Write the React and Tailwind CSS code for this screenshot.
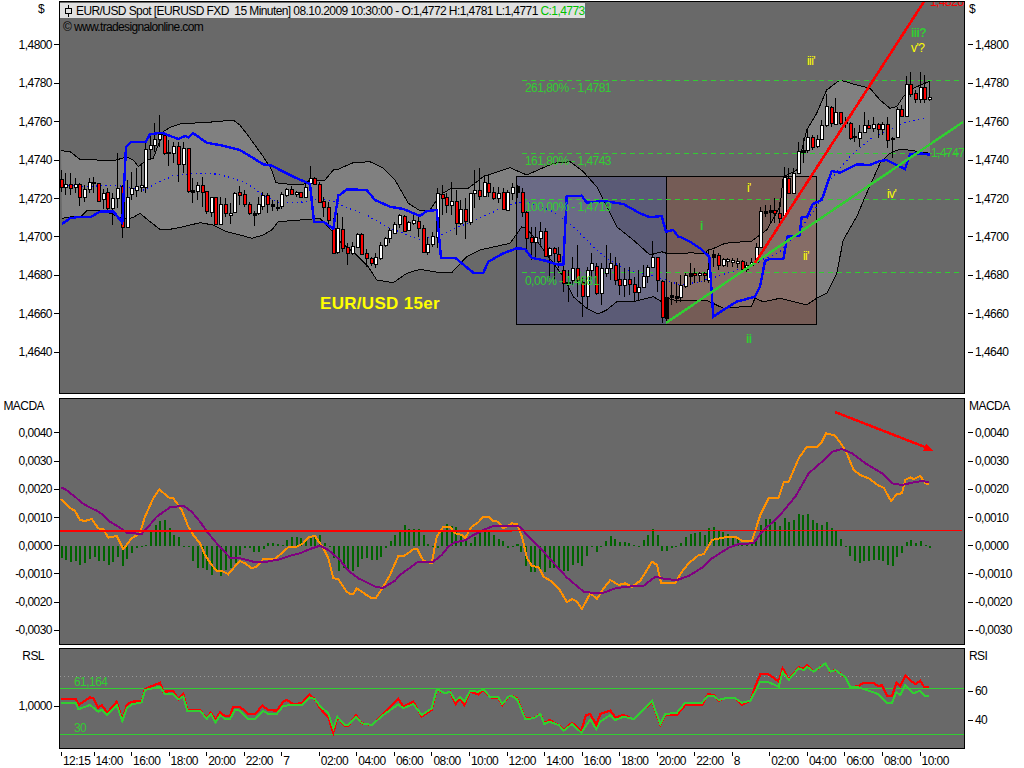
import React from "react";

const P = (o, list) => list.map(([x, y]) => [o[0] + x / 3, o[1] + y / 3]);
const S = (...lists) => lists.flat().map(([x, y]) => `${x.toFixed(1)},${y.toFixed(1)}`).join(" ");

const Z1 = [0, 0], Z2 = [340, 100], Z3 = [680, 0], Z9 = [640, 230];
const M6 = [0, 395], M7 = [512, 395], R4 = [0, 640], R5 = [512, 640];

const upper = [
  ...P(Z1, [[183,452],[210,455],[240,478],[290,480],[340,483],[380,470],[400,480],[415,500],[440,480],[460,475],[490,395],[510,382],[540,372],[600,368],[650,365],[700,360],[720,375],[750,415],[790,470],[815,510],[828,548],[860,552],[910,553],[930,540],[975,540],[1000,510],[1017,508]]),
  ...P(Z2, [[0,205],[40,188],[90,185],[130,205],[165,240],[205,310],[240,332],[270,330],[300,285],[330,267],[385,265],[430,230],[510,203],[560,225],[640,190],[690,185],[730,215],[770,260],[810,340],[830,380],[880,420],[930,465],[965,455]]),
  ...P(Z9, [[79,70],[120,72],[150,68],[195,72],[205,58]]),
  ...P(Z3, [[90,750],[135,730],[215,723],[260,690],[300,620],[310,530],[350,510],[380,390],[410,340],[440,270],[480,240],[530,255],[570,265],[600,300],[630,325],[650,320],[670,290],[700,265],[750,243]]),
];
const lower = [
  ...P(Z1, [[186,655],[215,650],[245,648],[262,630],[300,630],[330,640],[355,650],[380,658],[400,652],[420,640],[450,665],[480,688],[510,688],[550,680],[600,668],[640,675],[680,695],[720,705],[755,715],[790,705],[815,690],[835,665],[900,660],[960,655],[1017,715]]),
  ...P(Z2, [[0,425],[50,465],[85,500],[110,540],[160,548],[200,520],[240,508],[300,518],[335,518],[380,470],[420,450],[510,430],[545,381],[560,385],[600,435],[640,490],[670,530],[700,590],[740,625],[775,642],[800,630],[830,605],[880,605],[940,590],[965,605]]),
  ...P(Z9, [[80,205],[110,212],[150,210],[205,213]]),
  ...P(Z3, [[130,925],[215,918],[225,895],[250,905],[300,895],[340,905],[380,915],[410,895],[440,880],[470,820],[490,720],[530,650],[560,580],[600,490],[630,460],[660,447],[700,452],[750,460]]),
];
const dotted = S(
  P(Z1, [[190,555],[250,560],[340,555],[380,560],[430,570],[470,550],[520,527],[590,520],[650,522],[700,535],[740,550],[780,580],[840,610],[920,605],[960,595],[1017,610]]),
  P(Z2, [[0,315],[80,345],[140,380],[240,420],[300,405],[370,375],[520,310],[560,305],[640,335],[700,380],[760,440],[800,475],[860,510],[950,530]]),
  P(Z3, [[0,855],[60,845],[110,830],[200,800],[300,755],[350,700],[410,620],[450,540],[510,470],[580,410],[630,390],[680,365],[740,355]])
);
const blue = S(
  P(Z1, [[186,672],[210,655],[240,650],[270,652],[300,635],[340,634],[367,668],[378,440],[395,425],[437,425],[450,403],[485,398],[535,417],[555,408],[565,412],[580,400],[620,428],[670,437],[720,450],[790,493],[815,497],[880,530],[930,552],[942,665],[970,665],[1000,686],[1015,585],[1020,585]]),
  P(Z2, [[20,268],[80,270],[105,300],[150,320],[190,327],[240,348],[260,333],[290,330],[303,473],[345,473],[400,518],[430,518],[445,485],[490,460],[530,445],[555,447],[575,473],[620,483],[650,493],[670,494],[680,288],[725,287],[740,308],[790,303],[850,312],[900,340],[930,352],[965,348],[978,395],[1000,390],[1015,410]]),
  P(Z3, [[0,710],[30,725],[60,745],[88,770],[95,880],[100,950],[130,930],[170,905],[225,890],[240,860],[255,783],[270,777],[310,778],[322,710],[358,708],[365,652],[382,650],[398,612],[425,600],[455,513],[480,518],[530,493],[570,495],[600,483],[620,480],[650,495],[675,507],[690,462],[720,460],[750,464]])
);

const W = "#ffffff", R = "#ff0000", K = "#000000";
const C1 = [[183,R,510,538,560,575],[196,W,520,553,560,585],[210,R,518,553,563,585],[226,W,535,553,562,580],[238,R,550,553,592,617],[253,W,555,568,592,605],[268,W,535,547,568,580],[280,K,530,545,550,580],[295,R,550,550,602,603],[310,W,567,580,598,627],[322,R,565,577,625,630],[337,W,580,595,625,675],[352,W,460,565,595,625],[367,R,555,558,680,713],[380,W,540,590,680,685],[394,W,515,565,583,600],[408,W,505,558,570,590],[422,W,490,555,560,575],[436,W,422,448,562,580],[450,W,405,436,448,480],[463,W,370,418,436,455],[478,W,345,403,418,440],[492,R,405,405,458,465],[505,K,420,456,460,498],[520,W,425,438,460,490],[535,R,425,438,493,545],[549,W,425,443,493,520],[563,R,443,445,572,578],[577,K,535,570,575,608],[591,W,545,555,572,600],[605,R,530,556,575,620],[619,R,573,574,632,642],[634,W,590,592,635,650],[646,R,590,592,672,675],[661,W,590,612,672,675],[675,R,595,612,640,650],[689,W,610,638,645,672],[703,W,575,580,637,640],[718,R,558,576,584,615],[733,R,570,582,613,620],[746,R,605,613,640,645],[761,K,632,640,645,678],[775,W,590,612,640,645],[787,W,575,585,617,630],[802,R,580,586,612,640],[817,K,600,612,618,632],[830,K,600,620,624,632],[844,W,575,583,617,628],[859,W,563,568,585,590],[873,R,558,568,583,585],[887,W,572,577,583,590],[901,R,575,577,590,590],[916,W,545,562,590,595],[929,W,498,535,550,552],[943,R,530,535,553,555],[958,R,545,553,605,608],[970,R,590,604,622,650],[985,R,605,622,660,680],[999,R,655,685,760,762],[1012,W,640,685,757,762]];
const C2 = [[7,R,350,388,443,455],[22,R,430,440,458,495],[37,W,425,438,458,465],[50,W,398,403,440,445],[64,R,398,402,462,465],[79,R,448,460,475,500],[92,R,470,475,488,498],[106,W,460,472,492,505],[121,W,425,436,475,480],[134,W,410,415,436,440],[148,W,385,390,415,430],[163,W,365,372,398,400],[176,W,342,346,373,385],[191,R,345,347,392,395],[205,W,362,366,390,392],[220,W,345,360,368,375],[233,R,350,362,383,410],[248,R,375,383,457,460],[262,W,410,432,457,465],[276,W,395,408,432,440],[290,W,265,278,410,445],[305,R,255,283,295,345],[318,R,280,292,315,340],[332,W,245,303,315,345],[347,R,270,304,370,405],[361,W,300,327,370,375],[374,R,295,327,362,417],[389,W,280,280,365,375],[403,W,210,270,280,325],[416,R,205,270,288,300],[431,W,225,247,287,290],[445,R,225,250,275,290],[459,R,262,277,293,300],[473,W,260,278,295,310],[488,R,265,277,328,330],[501,W,270,277,330,332],[515,W,250,260,280,300],[530,K,255,258,275,295],[545,R,265,275,335,350],[557,R,330,335,415,450],[572,R,380,412,425,480],[586,W,380,412,425,480],[600,W,365,392,415,440],[614,R,385,392,467,470],[628,W,440,445,465,535],[641,R,440,445,460,540],[655,R,440,462,482,505],[669,R,490,510,550,575],[683,K,510,545,550,605],[697,W,470,503,540,555],[712,R,435,503,540,590],[726,R,530,545,587,650],[740,W,500,510,587,625],[754,W,460,490,510,540],[769,R,490,498,580,585],[782,W,490,503,580,615],[797,W,435,503,518,530],[810,W,460,490,505,540],[824,R,470,496,540,555],[838,R,490,538,555,585],[852,W,505,538,555,590],[867,R,500,538,553,585],[881,R,530,553,577,605],[895,W,510,560,577,600],[908,W,495,527,560,565],[922,W,495,500,527,550],[937,W,424,470,500,505],[952,R,470,470,540,575],[966,R,540,543,650,670],[979,K,590,590,655,670]];
const C9 = [[93,K,155,195,200,225],[107,K,155,198,203,220]];
const C3 = [[0,W,825,855,890,905],[15,W,820,825,858,865],[30,K,790,820,828,855],[43,R,805,818,826,850],[58,W,815,818,826,845],[72,R,815,818,826,845],[85,W,750,808,840,850],[100,K,750,763,770,800],[113,R,760,766,796,810],[128,W,775,778,795,802],[142,W,775,778,782,800],[155,W,775,780,785,802],[170,W,775,782,788,805],[185,R,780,782,808,815],[199,W,785,795,808,815],[213,W,775,787,795,802],[227,W,730,740,787,790],[241,W,620,632,742,745],[255,K,615,632,638,650],[269,K,615,630,636,665],[283,R,595,630,640,670],[298,R,605,640,655,675],[311,W,500,530,645,650],[325,R,505,533,578,580],[340,W,505,518,578,580],[355,W,425,452,518,520],[368,K,415,450,455,490],[382,W,385,412,450,460],[396,R,405,412,440,450],[410,W,405,418,438,445],[424,W,360,375,418,420],[438,W,283,318,375,380],[452,R,318,322,368,380],[466,W,295,337,372,375],[480,R,335,337,368,375],[495,W,350,365,370,385],[509,R,365,368,415,420],[523,K,385,408,412,425],[537,W,375,397,415,440],[551,W,335,376,397,400],[565,R,360,375,383,385],[580,W,350,373,383,395],[593,R,370,373,388,415],[607,W,365,373,388,405],[622,R,350,373,420,445],[636,K,410,413,418,475],[650,W,320,328,412,415],[664,R,315,327,347,350],[677,W,228,253,347,352],[691,R,215,253,283,290],[706,R,270,280,296,308],[720,W,215,262,298,310],[733,R,225,262,298,308],[748,W,245,290,298,302]];
const cand = (o, l) => l.map(([x, c, h, t, b, lo]) => ({ x: Math.round(o[0] + x / 3), c, h: Math.round(o[1] + h / 3), t: Math.round(o[1] + t / 3), b: Math.round(o[1] + b / 3), l: Math.round(o[1] + lo / 3) }));
const candles = [...cand(Z1, C1), ...cand(Z2, C2), ...cand(Z9, C9), ...cand(Z3, C3)];

const orange = S(
  P(M6, [[183,312],[205,335],[225,348],[240,375],[255,378],[275,372],[295,400],[310,403],[325,428],[350,423],[362,447],[370,462],[395,430],[420,415],[435,365],[460,310],[478,283],[505,307],[520,310],[545,345],[565,395],[580,420],[600,445],[615,480],[635,510],[650,527],[665,527],[685,538],[700,520],[720,498],[735,505],[755,520],[770,515],[790,492],[825,492],[865,457],[890,455],[910,445],[925,427],[945,423],[970,460],[985,490],[1000,550],[1015,552],[1040,590],[1050,597],[1060,597],[1070,580],[1095,597],[1115,610],[1128,608],[1150,575],[1170,540],[1195,483],[1212,483],[1240,463],[1252,463],[1270,497],[1295,505],[1310,425],[1330,395],[1350,395],[1365,415],[1385,420],[1395,430],[1415,395],[1435,382],[1450,365],[1465,365],[1480,378],[1495,380],[1510,400],[1536,385]]),
  P(M7, [[15,388],[30,425],[45,490],[60,513],[80,517],[95,545],[115,557],[140,580],[165,622],[180,612],[195,620],[210,642],[235,595],[255,612],[275,580],[295,555],[320,570],[340,565],[360,575],[385,557],[420,500],[435,510],[447,563],[490,563],[510,530],[530,505],[560,480],[575,478],[600,435],[640,427],[670,425],[690,437],[720,437],[745,360],[770,310],[800,308],[815,262],[830,260],[860,190],[885,155],[915,155],[930,140],[942,115],[970,122],[1000,165],[1025,225],[1045,240],[1070,250],[1100,272],[1115,278],[1137,318],[1155,297],[1170,295],[1180,255],[1195,247],[1205,252],[1225,243],[1240,265],[1252,268]])
);
const purple = S(
  P(M6, [[183,278],[195,282],[225,305],[245,323],[265,335],[290,347],[310,360],[330,380],[355,395],[380,413],[425,417],[445,395],[470,365],[510,337],[550,332],[575,350],[600,380],[625,415],[650,445],[690,488],[720,490],[760,500],[800,500],[840,493],[870,482],[900,475],[930,462],[960,452],[985,465],[1020,495],[1045,527],[1075,550],[1130,577],[1150,578],[1185,557],[1200,540],[1230,518],[1255,500],[1300,500],[1325,480],[1345,455],[1365,442],[1395,436],[1420,420],[1450,405],[1480,393],[1536,392]]),
  P(M7, [[25,395],[45,420],[90,465],[135,515],[165,548],[215,590],[240,593],[275,593],[310,580],[345,575],[395,572],[430,545],[460,552],[495,555],[530,543],[570,518],[600,490],[650,458],[680,447],[725,445],[750,410],[800,365],[850,305],[890,235],[930,200],[960,170],[990,162],[1020,175],[1060,205],[1110,235],[1140,265],[1170,270],[1200,263],[1230,258],[1252,262]])
);
const H6 = [488,495,500,497,510,503,492,487,497,497,510,500,485,512,492,473,458,452,450,410,390,378,375,400,420,427,453,453,498,518,518,525,540,528,542,525,520,505,480,458,460,470,472,462,445,445,447,450,435,427,427,430,432,430,420,420,445,457,490,527,520,523,527,517,492,490,495,495,485,460,437,420,405,390,403,402,402,420,447,457,458,405,387,393,395,423,430,443,427,415,410,405,420,432,438,460,455,447];
const H7 = [447,472,512,530,530,527,530,520,520,520,527,527,510,505,512,483,455,470,455,437,423,432,441,441,445,450,453,436,420,402,420,467,467,460,455,443,427,417,415,412,420,398,395,407,411,417,425,428,447,447,445,437,390,372,372,382,392,370,380,375,357,360,357,375,385,390,380,398,407,432,452,483,497,503,497,497,495,495,497,510,513,485,475,440,436,443,438,450,460];
const bars = [
  ...H6.map((y, i) => ({ x: Math.round(60.6 + i * 4.7), y: Math.round(395 + y / 3) })),
  ...H7.map((y, i) => ({ x: Math.round(515.6 + i * 4.7), y: Math.round(395 + y / 3) })),
];
const rsiRed = S(
  P(R4, [[183,176],[228,176],[235,195],[270,172],[280,175],[295,203],[305,195],[322,218],[350,185],[367,240],[380,195],[395,185],[425,183],[435,147],[480,128],[490,155],[520,153],[535,178],[550,162],[562,210],[600,210],[620,235],[632,218],[647,240],[660,217],[675,228],[690,228],[700,200],[720,200],[745,223],[765,223],[787,197],[805,210],[830,212],[850,185],[860,180],[880,192],[905,190],[928,163],[945,178],[960,205],[985,232],[1000,278],[1012,232],[1035,258],[1045,258],[1068,225],[1085,250],[1115,255],[1150,220],[1195,177],[1210,200],[1240,185],[1265,230],[1295,210],[1310,150],[1335,160],[1350,155],[1367,192],[1380,175],[1393,195],[1410,155],[1435,163],[1450,150],[1470,172],[1495,175],[1507,195],[1525,170]]),
  P(R5, [[0,168],[15,175],[40,235],[65,235],[85,222],[97,250],[112,240],[140,255],[155,270],[180,248],[208,272],[222,225],[235,222],[253,255],[265,222],[295,212],[310,232],[335,225],[365,238],[420,185],[445,255],[460,225],[495,225],[520,195],[570,195],[588,163],[605,165],[620,182],[640,175],[670,175],[690,195],[715,182],[735,125],[745,103],[770,103],[800,125],[812,85],[830,118],[860,82],[875,85],[885,76],[905,95],[940,70],[955,95],[970,90],[1000,112],[1015,142],[1040,138],[1055,128],[1085,130],[1100,138],[1110,135],[1125,168],[1140,168],[1153,128],[1165,138],[1180,107],[1200,125],[1210,133],[1225,122],[1237,142],[1252,142]])
);
const rsiGreen = S(
  P(R4, [[183,190],[228,190],[235,208],[270,195],[295,215],[305,210],[322,225],[350,195],[367,243],[380,205],[395,193],[425,187],[435,150],[480,140],[495,163],[520,163],[535,178],[550,170],[562,212],[600,212],[620,237],[632,222],[647,248],[660,225],[675,237],[690,237],[705,210],[720,212],[745,237],[765,237],[790,213],[805,222],[830,222],[850,197],[875,196],[905,195],[928,172],[945,178],[960,198],[985,220],[1000,265],[1012,230],[1035,255],[1045,255],[1068,230],[1085,250],[1115,255],[1150,225],[1195,193],[1210,205],[1240,192],[1265,225],[1295,205],[1310,147],[1335,160],[1350,155],[1367,182],[1380,170],[1393,185],[1410,153],[1435,155],[1450,148],[1470,170],[1495,172],[1507,192],[1525,170]]),
  P(R5, [[0,168],[15,178],[40,237],[65,235],[85,222],[97,252],[112,245],[140,255],[155,272],[180,252],[208,278],[235,238],[253,268],[265,245],[295,225],[310,240],[335,230],[365,237],[420,183],[445,252],[460,222],[495,218],[520,188],[570,188],[588,167],[605,167],[620,180],[640,175],[670,175],[690,188],[715,182],[735,145],[745,125],[770,127],[800,140],[812,95],[830,120],[860,85],[875,90],[885,80],[905,95],[940,70],[955,95],[970,90],[1000,112],[1015,142],[1040,142],[1070,152],[1100,163],[1125,188],[1140,188],[1153,157],[1165,165],[1180,135],[1205,160],[1225,152],[1237,167],[1252,167]])
);

const font = "font-['Liberation_Sans',sans-serif] text-[12px] tracking-[-0.55px] leading-[16px] text-black";
const G = "#32cd32", Y = "#ffff00";
const dashes = [80.5, 153.5, 199.5, 272.5];
const labels = [
  [525, 92, "261,80% - 1,4781", G], [525, 165, "161,80% - 1,4743", G], [525, 211, "100,00% - 1,4719", G], [525, 285, "0,00% - 1,4681", G],
  [931, 157, "1,4747", G], [930, 6, "1,4826", R],
  [700, 230, "i", G, true], [747, 192, "i'", Y], [746, 343, "ii", G, true], [803, 260, "ii'", Y], [807, 65, "iii'", Y], [911, 37, "iii?", G, true], [911, 52, "v'?", Y], [887, 198, "iv'", Y],
];

function Tick({ children, side, h }) {
  return side === "left" ? (
    <div className="flex items-center justify-end" style={{ height: h }}>
      <span>{children}</span>
      <span className="ml-[2px] h-px w-[5px] bg-black" />
    </div>
  ) : (
    <div className="flex items-center pl-[3px]" style={{ height: h }}>
      <span className="mr-[2px] h-px w-[5px] bg-black" />
      <span>{children}</span>
    </div>
  );
}

function Axis({ side, head, headH, h, values }) {
  return (
    <div className={side === "left" ? "w-[59px] shrink-0" : "flex-1"}>
      <div className={side === "left" ? "flex justify-end pr-[15px]" : "pl-[4px]"} style={{ height: headH }}>
        <span>{head}</span>
      </div>
      {values.map((v) => (
        <Tick key={v} side={side} h={h}>{v}</Tick>
      ))}
    </div>
  );
}

const mainV = ["1,4800", "1,4780", "1,4760", "1,4740", "1,4720", "1,4700", "1,4680", "1,4660", "1,4640"];
const macdV = ["0,0040", "0,0030", "0,0020", "0,0010", "0,0000", "-0,0010", "-0,0020", "-0,0030"];
const times = ["14:00", "16:00", "18:00", "20:00", "22:00", "7", "02:00", "04:00", "06:00", "08:00", "10:00", "12:00", "14:00", "16:00", "18:00", "20:00", "22:00", "8", "02:00", "04:00", "06:00", "08:00", "10:00"];

function TimeCell({ label, w }) {
  return (
    <div className={`${w} shrink-0 whitespace-nowrap`}>
      <div className="h-[4px] w-px bg-black" />
      <div className="-mt-[2px] ml-[2px] leading-[14px]">{label}</div>
    </div>
  );
}

export default function App() {
  return (
    <div className={`${font} flex h-[768px] w-[1024px] flex-col overflow-hidden bg-white pt-px`}>
      <div className="flex h-[393px] shrink-0">
        <Axis side="left" head="$" headH="24.8px" h="38.4px" values={mainV} />
        <div className="relative h-full w-[906px] shrink-0 border border-black bg-[#696969]">
          <svg className="block h-[391px] w-[904px]" viewBox="60 2 904 391">
            <polygon points={S(upper, [...lower].reverse())} fill="#808080" />
            <rect x="516.5" y="176" width="150" height="148" fill="rgba(60,60,150,0.3)" stroke="#000" shapeRendering="crispEdges" />
            <rect x="666.5" y="176" width="150" height="148" fill="rgba(150,60,40,0.28)" stroke="#000" shapeRendering="crispEdges" />
            <polyline points={S(upper)} fill="none" stroke="#000" strokeWidth="1" shapeRendering="crispEdges" />
            <polyline points={S(lower)} fill="none" stroke="#000" strokeWidth="1" shapeRendering="crispEdges" />
            <polyline points={dotted} fill="none" stroke="#0000ff" strokeWidth="1.2" strokeDasharray="1.2 3.5" shapeRendering="crispEdges" />
            {dashes.map((y) => (
              <line key={y} x1="522" x2="961" y1={y} y2={y} stroke={G} strokeDasharray="5 4" shapeRendering="crispEdges" />
            ))}
            {candles.map((c, i) => (
              <g key={i} shapeRendering="crispEdges">
                <rect x={c.x} y={c.h} width="1" height={c.l - c.h} fill="#000" />
                <rect x={c.x - 1} y={c.t} width="3" height={Math.max(c.b - c.t, 1) + 1} fill="#000" />
                <rect x={c.x} y={c.t + 1} width="2" height={Math.max(c.b - c.t - 1, 0)} fill={c.c} />
                <rect x={c.x + 2} y={c.t} width="1" height={Math.max(c.b - c.t, 1) + 1} fill="#000" />
              </g>
            ))}
            <polyline points={blue} fill="none" stroke="#0000ff" strokeWidth="2.4" shapeRendering="crispEdges" />
            <line x1="666" y1="323" x2="963" y2="122" stroke={G} strokeWidth="2.4" shapeRendering="crispEdges" />
            <line x1="755" y1="263" x2="925" y2="0" stroke={R} strokeWidth="2.6" shapeRendering="crispEdges" />
            {labels.map(([x, y, t, c, b]) => (
              <text key={t} x={x} y={y} fill={c} className={b ? "font-bold" : ""}>{t}</text>
            ))}
            <text x="320" y="309" fill={Y} className="text-[17px] font-bold tracking-[0.3px]">EUR/USD 15er</text>
            <text x="63" y="31" fill="#000" className="tracking-[-0.65px]">© www.tradesignalonline.com</text>
          </svg>
          <div className="absolute left-0 top-[1px] flex h-[15px] w-[525px] items-center whitespace-pre bg-[#e0e0e0] pl-[5px] tracking-[-0.58px]">
            <svg className="mr-[4px] h-[12px] w-[7px] shrink-0" viewBox="0 0 7 12" shapeRendering="crispEdges">
              <line x1="3.5" x2="3.5" y1="0" y2="12" stroke="#000" />
              <rect x="0.5" y="3.5" width="6" height="5" fill="#e0e0e0" stroke="#000" />
            </svg>
            <span>EUR/USD Spot [EURUSD FXD  15 Minuten] 08.10.2009 10:30:00 - O:1,4772 H:1,4781 L:1,4771 </span>
            <span className="text-[#00c000]">C:1,4773</span>
          </div>
        </div>
        <Axis side="right" head="$" headH="24.8px" h="38.4px" values={mainV} />
      </div>

      <div className="mt-[4px] flex h-[247px] shrink-0">
        <Axis side="left" head="MACDA" headH="20.9px" h="28.2px" values={macdV} />
        <div className="h-full w-[906px] shrink-0 border border-black bg-[#696969]">
          <svg className="block h-[245px] w-[904px]" viewBox="60 399 904 245">
            {bars.map((b, i) => (
              <rect key={i} x={b.x} width="2" y={Math.min(b.y, 546)} height={Math.max(Math.abs(b.y - 546), 1)} fill="#006400" shapeRendering="crispEdges" />
            ))}
            <polyline points={orange} fill="none" stroke="#ff9000" strokeWidth="2" shapeRendering="crispEdges" />
            <polyline points={purple} fill="none" stroke="#800080" strokeWidth="2" shapeRendering="crispEdges" />
            <line x1="60" x2="512" y1="531" y2="531" stroke={R} strokeWidth="2" shapeRendering="crispEdges" />
            <line x1="512" x2="962" y1="530.5" y2="530.5" stroke={R} strokeWidth="1" shapeRendering="crispEdges" />
            <line x1="835" y1="412" x2="930" y2="449" stroke={R} strokeWidth="2.5" shapeRendering="crispEdges" />
            <polygon points="933,451 923,451.5 926,444" fill={R} shapeRendering="crispEdges" />
          </svg>
        </div>
        <Axis side="right" head="MACDA" headH="20.9px" h="28.2px" values={macdV} />
      </div>

      <div className="mt-[3px] flex h-[101px] shrink-0">
        <Axis side="left" head="RSL" headH="48px" h="20px" values={["1,0000"]} />
        <div className="h-full w-[906px] shrink-0 border border-black bg-[#696969]">
          <svg className="block h-[99px] w-[904px]" viewBox="60 649 904 99">
            <line x1="60" x2="930" y1="676.5" y2="676.5" stroke="#999" strokeDasharray="1 3" shapeRendering="crispEdges" />
            <line x1="60" x2="964" y1="688.5" y2="688.5" stroke={G} shapeRendering="crispEdges" />
            <line x1="60" x2="964" y1="734.5" y2="734.5" stroke={G} shapeRendering="crispEdges" />
            <text x="74" y="686" fill={G}>61,164</text>
            <text x="74" y="732" fill={G}>30</text>
            <polyline points={rsiRed} fill="none" stroke={R} strokeWidth="2.2" shapeRendering="crispEdges" />
            <polyline points={rsiGreen} fill="none" stroke={G} strokeWidth="2" shapeRendering="crispEdges" />
          </svg>
        </div>
        <Axis side="right" head="RSI" headH="28.5px" h="29px" values={["60", "40"]} />
      </div>

      <div className="flex pl-[61px] pt-[3px]">
        <TimeCell label="12:15" w="w-[32.5px]" />
        {times.map((t, i) => (
          <TimeCell key={i} label={t} w="w-[37.55px]" />
        ))}
      </div>
    </div>
  );
}
